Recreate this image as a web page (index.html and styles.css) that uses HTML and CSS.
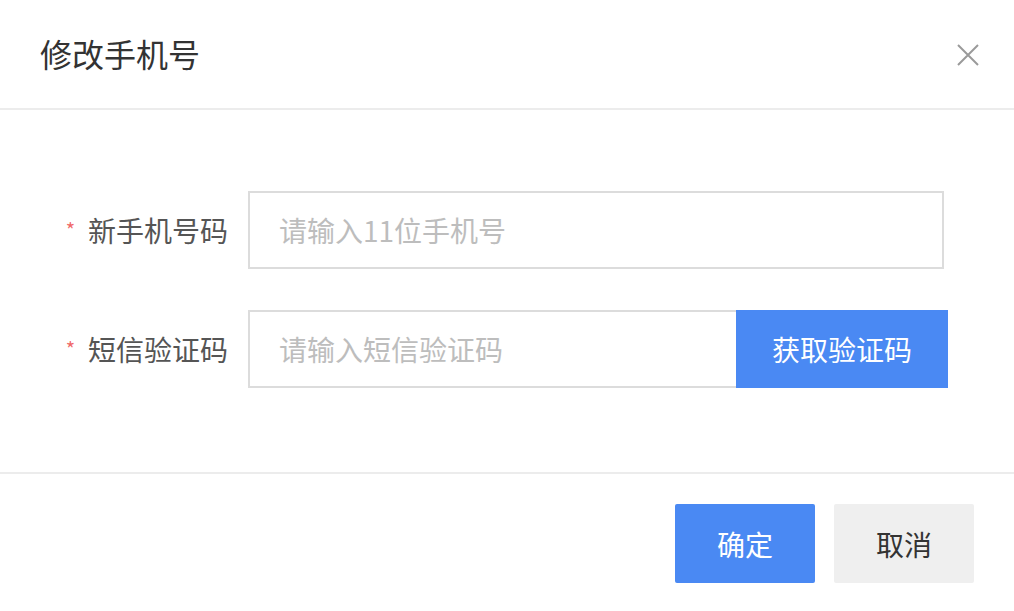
FILE: index.html
```html
<!DOCTYPE html>
<html lang="zh">
<head>
<meta charset="utf-8">
<link rel="stylesheet" href="styles.css">
</head>
<body>
<div class="dialog">
  <div class="header">
    <div class="title">修改手机号</div>
    <button class="close" aria-label="关闭">
      <svg width="24" height="24" viewBox="0 0 24 24"><path d="M2 2 L22 22 M22 2 L2 22" stroke="#9a9a9a" stroke-width="2" fill="none"/></svg>
    </button>
  </div>
  <div class="body">
    <div class="row">
      <label class="label"><span class="star">*</span>新手机号码</label>
      <div class="input input-wide"><span class="ph">请输入11位手机号</span></div>
    </div>
    <div class="row">
      <label class="label"><span class="star">*</span>短信验证码</label>
      <div class="input input-short"><span class="ph">请输入短信验证码</span></div>
      <button class="code-btn">获取验证码</button>
    </div>
  </div>
  <div class="footer">
    <button class="btn primary">确定</button>
    <button class="btn secondary">取消</button>
  </div>
</div>
</body>
</html>
```
FILE: styles.css
```css
* { box-sizing: border-box; }
html, body { margin: 0; padding: 0; background: #fff; }
body {
  font-family: "Noto Sans CJK SC", "Microsoft YaHei", sans-serif;
  width: 1014px;
  height: 611px;
  overflow: hidden;
}
.dialog { width: 1014px; }
.header {
  height: 110px;
  border-bottom: 2px solid #ececec;
  display: flex;
  align-items: center;
  justify-content: space-between;
  padding: 0 34px 0 40px;
}
.title {
  font-size: 32px;
  color: #333;
  line-height: 1;
  margin-top: -2px;
}
.close {
  border: none;
  background: none;
  padding: 0;
  width: 24px;
  height: 24px;
  margin-top: 2px;
}
.close svg { display: block; }
.body {
  padding: 81px 0 84px;
  border-bottom: 2px solid #ececec;
}
.row {
  display: flex;
  align-items: center;
  height: 78px;
}
.row + .row { margin-top: 41px; }
.label {
  width: 248px;
  padding-right: 20px;
  text-align: right;
  font-size: 28px;
  color: #555;
  line-height: 1;
}
.star {
  color: #f06a6a;
  font-size: 20px;
  margin-right: 13px;
  vertical-align: 4px;
}
.input {
  height: 78px;
  border: 2px solid #dcdcdc;
  display: flex;
  align-items: center;
  padding-left: 29px;
}
.input-wide { width: 696px; }
.input-short { width: 488px; border-right: none; }
.ph {
  font-size: 28px;
  color: #bdbdbd;
  line-height: 1;
}
.code-btn {
  width: 212px;
  height: 78px;
  border: none;
  background: #4a89f3;
  color: #fff;
  font-family: inherit;
  font-size: 28px;
  padding: 0;
}
.footer {
  display: flex;
  justify-content: flex-end;
  gap: 19px;
  padding: 30px 40px 0 0;
}
.btn {
  width: 140px;
  height: 79px;
  border: none;
  border-radius: 2px;
  font-family: inherit;
  font-size: 28px;
  padding: 0;
}
.primary { background: #4a89f3; color: #fff; }
.secondary { background: #efefef; color: #333; }
```
